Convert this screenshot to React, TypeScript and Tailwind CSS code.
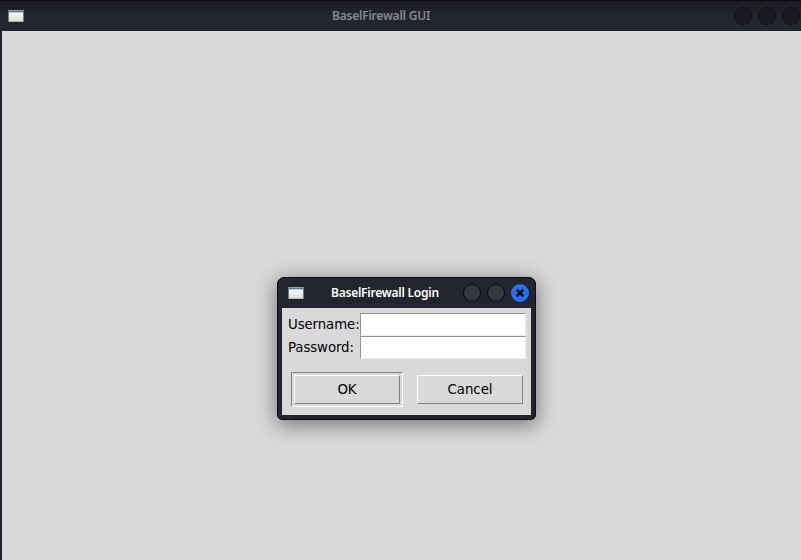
import React from "react";

function WindowIcon({ dim = false }: { dim?: boolean }) {
  return (
    <svg width="16" height="12" viewBox="0 0 16 12" shapeRendering="crispEdges" className="block shrink-0">
      <defs>
        <linearGradient id={dim ? "paneDim" : "pane"} x1="0" y1="0" x2="0" y2="1">
          <stop offset="0" stopColor="#fafaf9" />
          <stop offset="1" stopColor="#dcdfd7" />
        </linearGradient>
      </defs>
      <rect width="16" height="12" fill="#777a7c" />
      <rect x="1" y="0" width="14" height="1" fill="#8fa2b8" />
      <rect x="1" y="1" width="14" height="1" fill="#4f74a6" />
      <rect x="1" y="2" width="14" height="1" fill="#b9cde6" />
      <rect x="1" y="3" width="14" height="8" fill={dim ? "url(#paneDim)" : "url(#pane)"} />
      <rect x="1" y="11" width="14" height="1" fill="#b1b4ad" />
    </svg>
  );
}

function Entry({ label, type }: { label: string; type: string }) {
  return (
    <label className="flex h-[23px] items-center">
      <span className="w-[73px] whitespace-nowrap pl-px text-[13.33px] leading-[23px] tracking-[-0.1px]">{label}</span>
      <input
        type={type}
        className="h-[23px] w-[166px] border border-b-[#ececec] border-l-[#949494] border-r-[#ececec] border-t-[#949494] bg-white px-1 outline-none"
      />
    </label>
  );
}

function Button({ children }: { children: React.ReactNode }) {
  return (
    <button className="block h-[29px] w-[106px] border border-b-[#828282] border-l-white border-r-[#828282] border-t-white bg-[#d9d9d9] text-center text-[13.33px] leading-[27px]">
      {children}
    </button>
  );
}

export default function App() {
  return (
    <div className="relative h-[560px] w-[801px] overflow-hidden bg-[#d9d9d9] font-['DejaVu_Sans',sans-serif] text-black">
      <div className="flex h-full flex-col">
        <header className="flex h-[31px] shrink-0 items-center overflow-hidden border-t border-[#0b0c10] bg-linear-to-b from-[#1c1d25] via-[#22252e] to-[#242730] pl-2">
          <WindowIcon dim />
          <h1 className="w-[710px] shrink-0 pl-[308px] font-['Noto_Sans',sans-serif] text-[12px] font-semibold leading-4 tracking-[-0.22px] text-[#86898f]">
            BaselFirewall GUI
          </h1>
          <div className="flex shrink-0 gap-1.5">
            <span className="size-[18px] rounded-full border border-[#101115] bg-[#1a1b20]" />
            <span className="size-[18px] rounded-full border border-[#101115] bg-[#1a1b20]" />
            <span className="size-[18px] rounded-full border border-[#101115] bg-[#1a1b20]" />
          </div>
        </header>
        <main className="flex-1 border-l-2 border-[#231f2d] bg-[#d9d9d9]" />
      </div>

      <section className="absolute left-[277px] top-[277px] flex h-[143px] w-[259px] flex-col rounded-t-[7px] rounded-b-[5px] border border-[#0c0d13] bg-[#22252e] px-1 pb-1 shadow-[0_4px_20px_1px_rgba(0,0,0,0.46)]">
        <header className="flex h-[30px] shrink-0 items-center pl-1.5">
          <WindowIcon />
          <h2 className="w-[159px] shrink-0 pl-[27px] font-['Noto_Sans',sans-serif] text-[12px] font-semibold leading-4 tracking-[-0.23px] text-white">
            BaselFirewall Login
          </h2>
          <div className="flex shrink-0 gap-1.5">
            <span className="size-[18px] rounded-full border border-[#07080b] bg-[#343842]" />
            <span className="size-[18px] rounded-full border border-[#07080b] bg-[#343842]" />
            <span className="flex size-[18px] items-center justify-center rounded-full bg-[#2670f2]">
              <svg width="10" height="10" viewBox="0 0 10 10">
                <path d="M1.6 1.6 8.4 8.4M8.4 1.6 1.6 8.4" stroke="#080b14" strokeWidth="2.4" />
              </svg>
            </span>
          </div>
        </header>
        <div className="h-[107px] bg-[#d9d9d9] pl-[5px] pt-[5px]">
          <Entry label="Username:" type="text" />
          <Entry label="Password:" type="password" />
          <div className="flex items-start gap-3.5 pl-1 pt-[13px]">
            <div className="h-[35px] w-[112px] border border-b-white border-l-[#828282] border-r-white border-t-[#828282] p-0.5">
              <Button>OK</Button>
            </div>
            <div className="pt-[3px]">
              <Button>Cancel</Button>
            </div>
          </div>
        </div>
      </section>
    </div>
  );
}
